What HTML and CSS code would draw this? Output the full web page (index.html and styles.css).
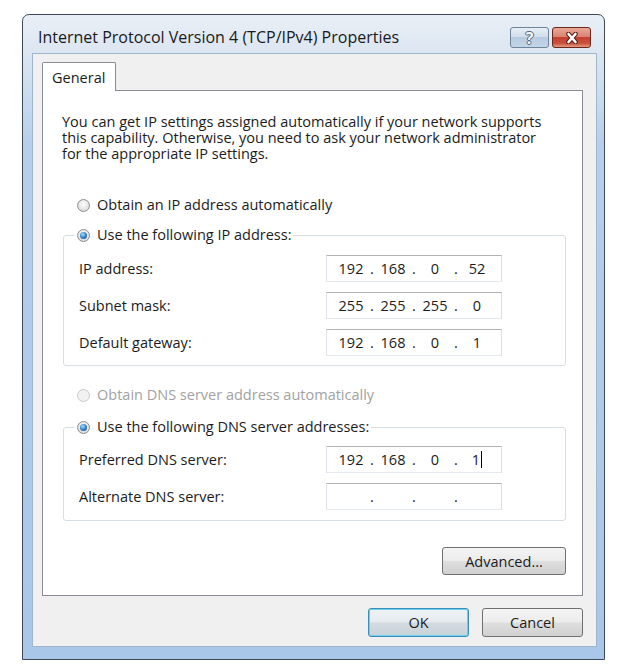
FILE: index.html
```html
<!DOCTYPE html>
<html lang="en">
<head>
    <meta charset="UTF-8">
    <meta name="viewport" content="width=device-width, initial-scale=1.0">
    <title>Internet Protocol Version 4 (TCP/IPv4) Properties</title>
    <link rel="stylesheet" href="styles.css">
</head>
<body>
    <div class="window">
        <div class="titlebar">
            <span class="title">Internet Protocol Version 4 (TCP/IPv4) Properties</span>
            <div class="caption-btns">
                <span class="cap-btn help">?</span>
                <span class="cap-btn close">
                    <svg width="14" height="12" viewBox="0 0 14 12">
                        <path d="M3.5 2 L10.5 10 M10.5 2 L3.5 10" stroke="#5b1d14" stroke-width="4.6" stroke-linecap="round" fill="none"/>
                        <path d="M3.5 2 L10.5 10 M10.5 2 L3.5 10" stroke="#ffffff" stroke-width="2.6" stroke-linecap="round" fill="none"/>
                    </svg>
                </span>
            </div>
        </div>

        <div class="client">
            <div class="tabs">
                <span class="tab">General</span>
            </div>
            <div class="panel">
                <p class="intro">
                    You can get IP settings assigned automatically if your network supports<br>
                    this capability. Otherwise, you need to ask your network administrator<br>
                    for the appropriate IP settings.
                </p>

                <div class="radio-row first-radio">
                    <span class="radio"></span>Obtain an IP address automatically
                </div>

                <fieldset class="group ip-group">
                    <legend>
                        <span class="radio-row"><span class="radio checked"></span>Use the following IP address:</span>
                    </legend>
                    <div class="field-row">
                        <span class="field-label">IP address:</span>
                        <div class="ip-box">
                            <span class="octet">192</span><span class="dot">.</span><span class="octet">168</span><span class="dot">.</span><span class="octet">0</span><span class="dot">.</span><span class="octet">52</span>
                        </div>
                    </div>
                    <div class="field-row">
                        <span class="field-label">Subnet mask:</span>
                        <div class="ip-box">
                            <span class="octet">255</span><span class="dot">.</span><span class="octet">255</span><span class="dot">.</span><span class="octet">255</span><span class="dot">.</span><span class="octet">0</span>
                        </div>
                    </div>
                    <div class="field-row">
                        <span class="field-label">Default gateway:</span>
                        <div class="ip-box">
                            <span class="octet">192</span><span class="dot">.</span><span class="octet">168</span><span class="dot">.</span><span class="octet">0</span><span class="dot">.</span><span class="octet">1</span>
                        </div>
                    </div>
                </fieldset>

                <div class="radio-row dns-radio disabled">
                    <span class="radio"></span>Obtain DNS server address automatically
                </div>

                <fieldset class="group dns-group">
                    <legend>
                        <span class="radio-row"><span class="radio checked"></span>Use the following DNS server addresses:</span>
                    </legend>
                    <div class="field-row">
                        <span class="field-label">Preferred DNS server:</span>
                        <div class="ip-box">
                            <span class="octet">192</span><span class="dot">.</span><span class="octet">168</span><span class="dot">.</span><span class="octet">0</span><span class="dot">.</span><span class="octet">1<span class="caret"></span></span>
                        </div>
                    </div>
                    <div class="field-row">
                        <span class="field-label">Alternate DNS server:</span>
                        <div class="ip-box">
                            <span class="octet"></span><span class="dot">.</span><span class="octet"></span><span class="dot">.</span><span class="octet"></span><span class="dot">.</span><span class="octet"></span>
                        </div>
                    </div>
                </fieldset>

                <div class="advanced-row">
                    <button type="button" class="btn advanced">Advanced...</button>
                </div>
            </div>

            <div class="dialog-buttons">
                <button type="button" class="btn default">OK</button>
                <button type="button" class="btn">Cancel</button>
            </div>
        </div>
    </div>
</body>
</html>
```

FILE: styles.css
```css
body {
    margin: 0;
    background-color: #fff;
    font-family: "Open Sans", "Noto Sans", sans-serif;
    font-size: 14.5px;
    color: #1c1c1c;
}
.window {
    width: 583px;
    box-sizing: border-box;
    margin: 14px 0 0 22px;
    padding: 0 7px 12px 9px;
    border: 1px solid #3e4a57;
    border-radius: 7px 7px 0 0;
    background: linear-gradient(to bottom, #e9eff6 0, #dce6f1 38px, #b6cfea 130px, #a8c7e9 100%);
}
.titlebar {
    display: flex;
    align-items: flex-start;
    height: 38px;
    box-sizing: border-box;
    padding: 12px 6px 0 6px;
}
.title {
    font-size: 16px;
    line-height: 20px;
    color: #1a1a1a;
}
.caption-btns {
    margin-left: auto;
    display: flex;
    gap: 3px;
}
.cap-btn {
    width: 39px;
    height: 21px;
    box-sizing: border-box;
    border-radius: 3px;
    display: flex;
    align-items: center;
    justify-content: center;
}
.help {
    border: 1px solid #6f8399;
    background: linear-gradient(to bottom, #e6eef6 0, #d2deeb 45%, #b8cbe0 50%, #c3d5e8 100%);
    color: #f4f7fb;
    font-weight: bold;
    font-size: 16px;
    line-height: 1;
    text-shadow: 1px 0 0 #55677c, -1px 0 0 #55677c, 0 1px 0 #55677c, 0 -1px 0 #55677c;
}
.close {
    border: 1px solid #6d261c;
    background: linear-gradient(to bottom, #eaa898 0, #db8472 45%, #c4402f 50%, #c8503c 80%, #e29c80 100%);
}
.client {
    background-color: #f0f0f0;
    border: 1px solid #9fb6cd;
    padding: 8px 13px 9px 9px;
}
.tabs {
    display: flex;
}
.tab {
    position: relative;
    z-index: 1;
    width: 74px;
    height: 29px;
    box-sizing: border-box;
    padding-left: 9px;
    margin-bottom: -1px;
    display: flex;
    align-items: center;
    background-color: #fff;
    border: 1px solid #898c95;
    border-bottom: none;
    border-radius: 2px 2px 0 0;
}
.panel {
    background-color: #fff;
    border: 1px solid #898c95;
    padding: 23px 16px 20px 19px;
}
.intro {
    margin: 0;
    line-height: 16px;
}
.radio-row {
    display: flex;
    align-items: center;
    gap: 7px;
    height: 16px;
    line-height: 16px;
    white-space: nowrap;
}
.first-radio {
    margin-top: 35px;
    padding-left: 15px;
}
.dns-radio {
    margin-top: 21px;
    padding-left: 15px;
}
.disabled {
    color: #a2a2a2;
}
.radio {
    width: 13px;
    height: 13px;
    flex: none;
    box-sizing: border-box;
    border-radius: 50%;
    border: 1px solid #8e8f8f;
    background: radial-gradient(circle at 50% 40%, #fefefe 0, #e7e7e7 50%, #cbcbcb 100%);
    display: flex;
    align-items: center;
    justify-content: center;
}
.radio.checked::after {
    content: "";
    width: 7px;
    height: 7px;
    border-radius: 50%;
    background: radial-gradient(circle at 40% 35%, #a4dcfb 0, #2c7cc4 55%, #0d4682 100%);
}
.disabled .radio {
    border-color: #c8c8c8;
    background: #f2f2f2;
}
.group {
    margin: 0 0 0 1px;
    min-width: 0;
    border: 1px solid #d5dfe5;
    border-radius: 3px;
}
.ip-group {
    margin-top: 14px;
    padding: 12px 15px 9px 15px;
}
.dns-group {
    margin-top: 16px;
    padding: 11px 15px 10px 15px;
}
.group legend {
    padding: 0 2px;
    margin-left: -4px;
}
.field-row {
    display: flex;
    align-items: center;
    height: 27px;
}
.field-row + .field-row {
    margin-top: 10px;
}
.field-label {
    width: 247px;
}
.ip-box {
    width: 176px;
    height: 27px;
    box-sizing: border-box;
    padding-left: 7px;
    display: flex;
    align-items: center;
    border: 1px solid;
    border-color: #b2b4ba #dbdfe6 #e3e9ef #e2e3ea;
    background-color: #fff;
}
.octet {
    width: 34px;
    text-align: center;
    display: flex;
    justify-content: center;
    align-items: center;
}
.dot {
    width: 8px;
    text-align: center;
}
.caret {
    display: inline-block;
    width: 1px;
    height: 17px;
    margin-left: 1px;
    background-color: #000;
}
.advanced-row {
    display: flex;
    justify-content: flex-end;
    margin-top: 26px;
}
.btn {
    font-family: inherit;
    font-size: 14.5px;
    color: #1c1c1c;
    height: 28px;
    padding: 0;
    border: 1px solid #707070;
    border-radius: 3px;
    background: linear-gradient(to bottom, #f4f4f4 0, #ececec 48%, #dedede 52%, #d0d0d0 100%);
}
.advanced {
    width: 124px;
}
.dialog-buttons {
    display: flex;
    justify-content: flex-end;
    gap: 13px;
    margin-top: 12px;
}
.dialog-buttons .btn {
    width: 101px;
    height: 29px;
}
.btn.default {
    border-color: #3a8fb8;
    box-shadow: inset 0 0 0 1px #6fcfee;
    background: linear-gradient(to bottom, #eef3f6 0, #e4eaee 48%, #d3dbe1 52%, #c9d2d8 100%);
}
```
